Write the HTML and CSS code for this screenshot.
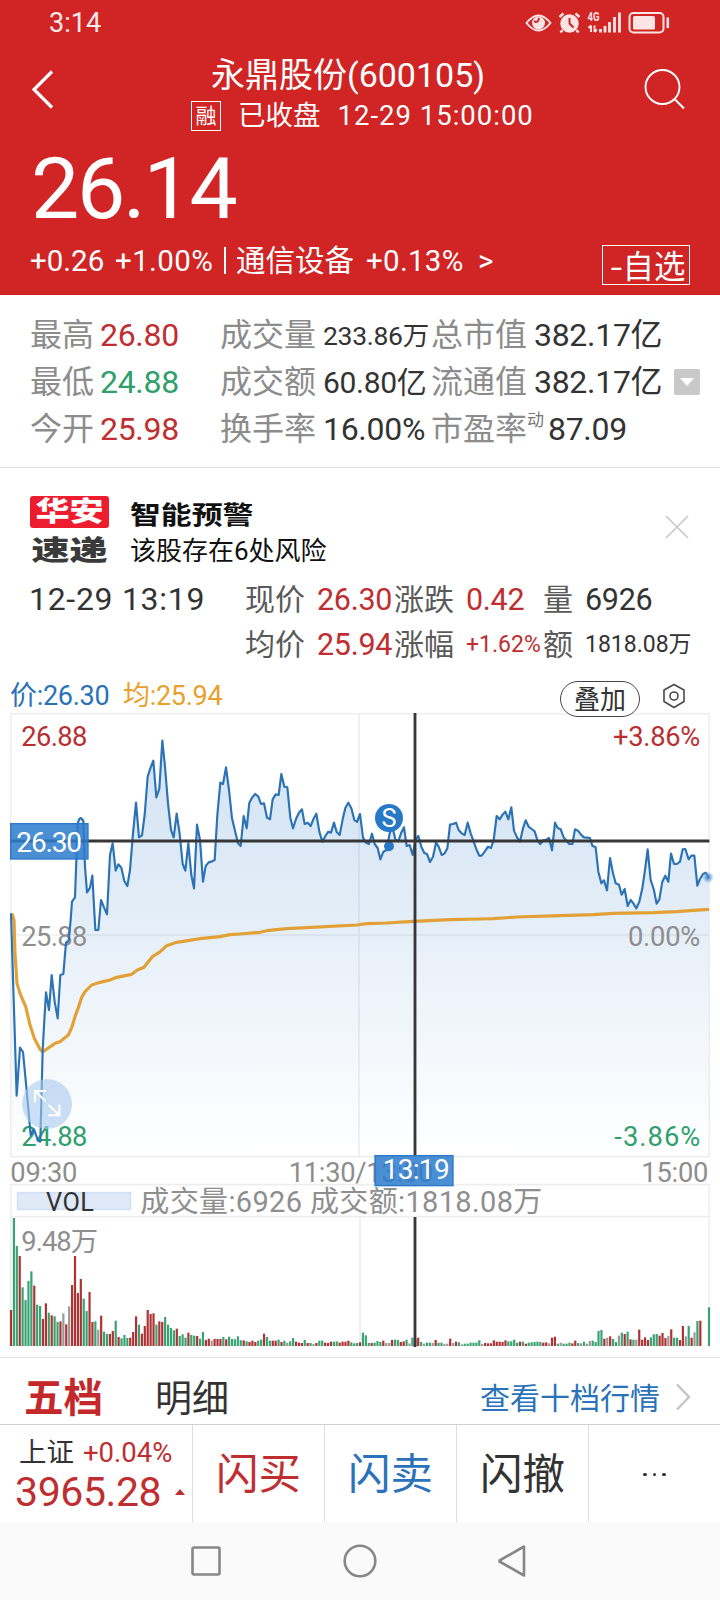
FILE: index.html
```html
<!DOCTYPE html>
<html lang="zh-CN">
<head>
<meta charset="utf-8">
<title>永鼎股份(600105)</title>
<link rel="stylesheet" href="styles.css">
</head>
<body>
<div class="app">
  <header class="header">
    <div class="status">
      <span>3:14</span>
      <svg class="status-icons" width="146" height="24" viewBox="0 0 146 24" fill="none" stroke="#fde4e4" stroke-width="2">
        <path d="M1.500 13Q7.500 5.500 13.500 5.500Q19.500 5.500 25.500 13Q19.500 20.500 13.500 20.500Q7.500 20.500 1.500 13Z"/>
        <circle cx="13.500" cy="13" r="6.500" fill="#fde4e4" stroke="none"/>
        <path d="M9 11Q13 14 14 8" stroke="#d12425" stroke-width="2"/>
        <circle cx="44.500" cy="13.500" r="9.200" fill="#fde4e4" stroke="none"/>
        <path d="M44.500 8V13.500L48.500 17.500" stroke="#d12425" stroke-width="2"/>
        <path d="M34.500 7L38.500 3.500M50.500 3.500L54.500 7M37.500 20L35.500 22.500M51.500 20L53.500 22.500" stroke-width="2.400"/>
        <path d="M66 15.500V22M63.500 18L66 15.500M69.500 15.500V22M69.500 22L72 19.500" stroke-width="1.900"/>
        <path d="M75.500 19V22.500M80 16V22.500M84.500 12V22.500M89.500 7V22.500M94.500 2.500V22.500" stroke-width="2.800"/>
        <rect x="104.500" y="3" width="34" height="19.500" rx="4"/>
        <rect x="108" y="6" width="22" height="13.500" rx="1.500" fill="#fde4e4" stroke="none"/>
        <path d="M142.800 7.500V18" stroke-width="2.600"/>
        <text x="62.500" y="11.300" class="net" fill="#fde4e4" stroke="none" textLength="12" lengthAdjust="spacingAndGlyphs">4G</text>
      </svg>
    </div>
    <div class="topbar">
      <svg class="back" width="26" height="44" viewBox="0 0 26 44" fill="none" stroke="#fff" stroke-width="3.200"><path d="M23 4.500L5 22.500L23 40.500"/></svg>
      <div class="heading">
        <h1 class="title">永鼎股份(600105)</h1>
        <div class="session"><span class="margin-tag">融</span><span class="closed">已收盘</span><span class="stamp">12-29 15:00:00</span></div>
      </div>
      <svg class="search" width="44" height="44" viewBox="0 0 44 44" fill="none" stroke="#fff" stroke-width="1.900"><circle cx="20.500" cy="20" r="17"/><path d="M32.500 32L42 41.500"/></svg>
    </div>
    <div class="price">26.14</div>
    <div class="change">
      <span class="delta">+0.26</span><span class="pct">+1.00%</span><i class="bar"></i><span class="sector">通信设备</span><span class="sector-pct">+0.13%</span><span class="gt">&gt;</span>
      <button class="watch"><span class="minus">-</span>自选</button>
    </div>
  </header>

  <section class="stats">
    <div class="stat-row"><span>最高</span><b class="red">26.80</b><span>成交量</span><b class="small">233.86万</b><span>总市值</span><b>382.17亿</b></div>
    <div class="stat-row"><span>最低</span><b class="green">24.88</b><span>成交额</span><b class="medium">60.80亿</b><span>流通值</span><b>382.17亿</b><i class="expand"><i class="down"></i></i></div>
    <div class="stat-row"><span>今开</span><b class="red">25.98</b><span>换手率</span><b>16.00%</b><span>市盈率</span><b class="pe"><sup>动</sup>87.09</b></div>
  </section>

  <section class="alert">
    <div class="brand"><div class="brand-top"><span class="squash">华安</span></div><div class="brand-bottom">速递</div></div>
    <div class="alert-text"><div class="alert-title"><span class="wide">智能预警</span></div><div class="alert-sub">该股存在6处风险</div></div>
    <svg class="close" width="24" height="24" viewBox="0 0 24 24" stroke="#c9c9c9" stroke-width="1.700"><path d="M1 1L23 23M23 1L1 23"/></svg>
  </section>

  <section class="detail">
    <div class="detail-row"><b class="moment">12-29 13:19</b><span>现价</span><b class="red">26.30</b><span>涨跌</span><b class="red">0.42</b><span>量</span><b>6926</b></div>
    <div class="detail-row"><b></b><span>均价</span><b class="red">25.94</b><span>涨幅</span><b class="red fine">+1.62%</b><span>额</span><b class="fine">1818.08万</b></div>
  </section>

  <section class="legend">
    <span class="now">价:26.30</span><span class="avg">均:25.94</span>
    <button class="overlay">叠加</button>
    <svg class="gear" width="24" height="26" viewBox="0 0 24 26" fill="none" stroke="#4a4a4a" stroke-width="1.600"><path d="M12 1.500L22 7V18.500L12 24.500L2 18.500V7Z"/><circle cx="12" cy="13" r="4"/></svg>
  </section>

  <svg class="chart" viewBox="0 39 2160 1911">
    <defs>
      <linearGradient id="area" gradientUnits="userSpaceOnUse" x1="0" y1="120" x2="0" y2="1370">
        <stop offset="0" stop-color="#2f7bd0" stop-opacity=".21"/><stop offset=".25" stop-color="#2f7bc8" stop-opacity=".17"/><stop offset=".5" stop-color="#2f7bc8" stop-opacity=".11"/><stop offset="1" stop-color="#2f7bc8" stop-opacity="0"/>
      </linearGradient>
      <radialGradient id="last"><stop offset="0" stop-color="#2a72b8"/><stop offset="1" stop-color="#7fb4e8" stop-opacity=".25"/></radialGradient>
    </defs>
    <g fill="none" stroke="#eeeef0" stroke-width="5">
      <path d="M32 41H2128V1370H32Z M1077 41V1370 M32 705H2128"/>
      <path d="M32 1938V1454H2128V1938 M32 1550H2128 M1080 1550V1938"/>
    </g>
    <path id="price-area" fill="url(#area)"/>
    <g class="axis">
      <text x="64" y="137" class="up" textLength="198">26.88</text>
      <text x="64" y="737" textLength="198">25.88</text>
      <text x="64" y="1337" class="fall" textLength="198">24.88</text>
      <text x="1839" y="137" class="up" textLength="262">+3.86%</text>
      <text x="1884" y="737" textLength="217">0.00%</text>
      <text x="1843" y="1337" class="fall" textLength="258">-3.86%</text>
      <text x="31" y="1446" textLength="201">09:30</text>
      <text x="866" y="1446" textLength="434">11:30/13:00</text>
      <text x="1924" y="1446" textLength="201">15:00</text>
    </g>
    <path id="avg-line" class="avg-line"/>
    <path id="price-line" class="price-line"/>
    <circle cx="2124" cy="532" r="16" fill="url(#last)"/>
    <circle cx="1167" cy="439" r="15" fill="#2878c8"/>
    <circle cx="1167" cy="354" r="42" fill="#2878c8"/>
    <text x="1167" y="381" class="mark">S</text>
    <circle cx="141" cy="1212" r="75" fill="#a9c9ee" opacity=".6"/>
    <path d="M136 1203L105 1173M105 1206V1173H138M146 1215L178 1246M178 1214V1246H145" fill="none" stroke="#fff" stroke-width="6"/>
    <g id="volume"></g>
    <path d="M32 423H2128M1245 39V1369M1245 1551V1941" stroke="#373737" stroke-width="8.500"/>
    <g fill="#2c7bcd" fill-opacity=".86" stroke="#2d79c8" stroke-width="4">
      <rect x="32" y="371" width="232" height="106"/>
      <rect x="1125" y="1367" width="234" height="90"/>
    </g>
    <text x="49" y="456" class="tag" textLength="197">26.30</text>
    <text x="1148" y="1438" class="tag" textLength="201">13:19</text>
    <rect x="53" y="1478" width="338" height="50" fill="#dfe9f8" stroke="#d2e0f5" stroke-width="5"/>
    <text x="138" y="1532" class="vol" textLength="144">VOL</text>
    <text x="421" y="1537" class="vol-info" textLength="1206">成交量:6926 成交额:1818.08万</text>
    <text x="64" y="1652" class="vol-max" textLength="230">9.48万</text>
  </svg>

  <section class="tabs">
    <span class="tab on">五档</span><span class="tab">明细</span><a class="more">查看十档行情</a>
    <svg width="18" height="28" viewBox="0 0 18 28" fill="none" stroke="#c4c4c4" stroke-width="2.400"><path d="M3 1.500L15 14L3 26.500"/></svg>
  </section>

  <footer class="trade">
    <div class="index">
      <div class="index-top"><span>上证</span><span class="red">+0.04%</span></div>
      <div class="index-value">3965.28<i class="up-mark"></i></div>
    </div>
    <button class="action red">闪买</button>
    <button class="action blue">闪卖</button>
    <button class="action">闪撤</button>
    <button class="action dots"><i></i><i></i><i></i></button>
  </footer>

  <nav class="nav">
    <svg width="32" height="34" viewBox="0 0 32 34" fill="none" stroke="#878787" stroke-width="2.600"><rect x="2.500" y="3.500" width="27" height="27" rx="1.500"/></svg>
    <svg width="34" height="34" viewBox="0 0 34 34" fill="none" stroke="#878787" stroke-width="2.600"><circle cx="17" cy="17" r="15.300"/></svg>
    <svg width="30" height="34" viewBox="0 0 30 34" fill="none" stroke="#878787" stroke-width="2.600" stroke-linejoin="round"><path d="M27 2.500V31.500L2.500 17.500V16.500Z"/></svg>
  </nav>
</div>
<script src="chart.js"></script>
</body>
</html>
```

FILE: styles.css
```css
* { box-sizing: border-box; }
body { margin: 0; background: #fff; color: #333; font-family: Roboto, "Noto Sans CJK SC", sans-serif; }
button { margin: 0; padding: 0; background: none; border: 0; color: inherit; font: inherit; }
b, h1 { font-weight: 400; margin: 0; }
i { display: block; }
span, b { white-space: nowrap; }
.app { width: 720px; height: 1600px; display: flex; flex-direction: column; overflow: hidden; }
.app > * { flex: none; }
.red { color: #bf2e30; }
.green { color: #2fa06d; }
.blue { color: #2a72ba; }

.header { height: 295px; background: #d12425; color: #fff; }
.status { height: 45px; padding: 0 49px 0 49px; display: flex; justify-content: space-between; font-size: 27px; line-height: 47px; color: #fde9e9; }
.status-icons { margin-top: 10px; }
.net { font-size: 12.500px; font-weight: 700; }
.topbar { height: 89px; display: grid; grid-template-columns: 60px 1fr 78px; }
.back { margin: 22px 0 0 29px; }
.search { margin-top: 22px; }
.heading { padding-top: 9px; }
.title { margin-left: 151px; font-size: 34px; line-height: 42px; white-space: nowrap; }
.session { display: flex; align-items: center; height: 38px; margin-left: 131px; font-size: 27.500px; line-height: 38px; }
.margin-tag { width: 30px; height: 30px; margin-top: 2px; border: 1px solid #fff; font-size: 21px; line-height: 28px; text-align: center; }
.closed { margin: 1px 0 0 17px; }
.stamp { margin: 1px 0 0 17px; letter-spacing: 1px; }
.price { height: 109px; padding-left: 31px; font-size: 86px; line-height: 110px; letter-spacing: -2.300px; }
.change { display: flex; height: 52px; padding: 0 30px; font-size: 29.500px; line-height: 36px; }
.delta { width: 85px; }
.pct { width: 109px; letter-spacing: .4px; }
.bar { width: 2px; height: 27px; margin-top: 4px; background: #fff; }
.sector { width: 130px; margin-left: 10px; }
.sector-pct { width: 112px; letter-spacing: .3px; }
.gt { flex: 1; }
.watch { display: flex; justify-content: center; width: 88px; height: 40px; margin-top: 2px; border: 1px solid #fff; font-size: 31.500px; line-height: 44px; white-space: nowrap; }
.minus { width: 16px; transform: scaleX(1.300); transform-origin: 0 50%; }

.stats { height: 173px; padding: 17px 0 0 30px; border-bottom: 1px solid #e0e0e0; font-size: 32px; line-height: 47px; }
.stat-row { display: grid; grid-template-columns: 70px 120px 103px 108px 103px 140px 26px; align-items: center; height: 47px; }
.stat-row b { letter-spacing: -.3px; }
.stat-row span { color: #8c8c8c; }
.stat-row .small { font-size: 26.500px; }
.stat-row .medium { font-size: 30px; }
.pe { display: flex; margin-left: -7px; }
.pe sup { width: 21px; font-size: 17px; line-height: 29px; vertical-align: baseline; color: #777; }
.expand { display: grid; place-items: center; width: 26px; height: 26px; margin-top: -2px; border-radius: 2px; background: #c9c9c9; }
.down { border: 7px solid transparent; border-top: 8px solid #fff; border-bottom: 0; }

.alert { display: flex; height: 108px; padding: 28px 31px 0 30px; color: #111; }
.brand { width: 79px; }
.brand-top { height: 32px; border-radius: 3px; background: #ed1c2e; color: #fff; font-size: 34px; font-weight: 900; line-height: 32px; text-align: center; }
.squash { display: inline-block; transform: translateY(-1px) scaleY(.8); }
.brand-bottom { height: 38px; font-size: 38px; font-weight: 900; line-height: 46px; text-align: center; color: #3a3a3a; transform: scaleY(.72); transform-origin: 50% 60%; }
.alert-text { flex: 1; margin-left: 21px; }
.alert-title { height: 37px; font-size: 25.500px; font-weight: 700; line-height: 38px; }
.wide { display: inline-block; transform: scaleX(1.210); transform-origin: 0 50%; }
.alert-sub { font-size: 26px; line-height: 37px; }
.close { margin-top: 19px; }

.detail { padding-top: 1px; margin-bottom: -1px; font-size: 30.500px; line-height: 45px; }
.detail-row { display: grid; grid-template-columns: 215px 72px 77px 72px 77px 42px 1fr; height: 45px; padding-left: 30px; align-items: center; }
.detail-row b { letter-spacing: -.3px; }
.detail-row span { color: #5a5a5a; font-size: 30px; }
.detail-row .moment { font-size: 32px; letter-spacing: .7px; margin-left: -1px; }
.detail-row .fine { font-size: 23px; letter-spacing: 0; }

.legend { display: flex; height: 47px; padding: 7px 0 0 10px; font-size: 27px; line-height: 47px; letter-spacing: -.3px; position: relative; z-index: 1; }
.now { width: 113px; color: #2a72b8; }
.avg { width: 437px; color: #e9a02c; }
.overlay { width: 80px; height: 36px; margin: 8px 22px 0 0; border: 1.500px solid #444; border-radius: 18px; font-size: 26px; line-height: 36px; background: #fff; }
.gear { margin-top: 10px; }

.chart { display: block; width: 720px; height: 637px; }
.axis text { font-size: 82px; fill: #8e8e8e; }
.axis .up { fill: #b92f31; }
.axis .fall { fill: #2fa06d; }
.price-line { fill: none; stroke: #2c73b5; stroke-width: 6.500; stroke-linejoin: round; }
.avg-line { fill: none; stroke: #e2a137; stroke-width: 9.500; stroke-linejoin: round; }
.mark { font-size: 76px; fill: #fff; text-anchor: middle; }
.tag { font-size: 84px; fill: #fff; }
.vol { font-size: 76px; fill: #333; }
.vol-info { font-size: 87px; fill: #8e8e8e; }
.vol-max { font-size: 82px; fill: #8e8e8e; }
.bar-r { fill: #ad3334; }
.bar-g { fill: #3aa374; }
.bar-x { fill: #999; }

.tabs { display: flex; align-items: center; height: 67px; margin-top: 7px; padding: 12px 28px 0 24px; border-top: 1px solid #e2e2e2; }
.tab { width: 131px; padding-top: 5px; font-size: 37px; line-height: 54px; }
.tab.on { padding-top: 3px; font-size: 39.500px; font-weight: 700; color: #c4282a; }
.more { margin: -3px 14px 0 auto; font-size: 30px; color: #2a72ba; }

.trade { display: grid; grid-template-columns: 193px 132px 132px 132px 1fr; height: 98px; border-top: 1.500px solid #cfcfcf; }
.index { padding: 7px 0 0 15px; border-right: 1px solid #dedede; }
.index-top { display: flex; gap: 9px; padding-left: 4px; font-size: 27.500px; line-height: 42px; }
.index-value { display: flex; align-items: center; font-size: 41px; line-height: 38px; margin-top: -1px; letter-spacing: -.4px; color: #bf2e30; }
.up-mark { margin: 0 0 0 14px; border: 5.500px solid transparent; border-bottom: 6px solid #bf2e30; border-top: 0; }
.action { border-right: 1px solid #dedede; font-size: 42.500px; line-height: 99px; white-space: nowrap; }
.dots { display: flex; justify-content: center; align-items: center; gap: 6px; border-right: 0; }
.dots i { width: 3.500px; height: 3.500px; border-radius: 50%; background: #333; }

.nav { display: flex; height: 79px; padding: 22px 0 0 190px; background: #fafafa; }
.nav svg:nth-child(2) { margin-left: 121px; }
.nav svg:nth-child(3) { margin-left: 120px; }
```

FILE: chart.js
```js
// One unit is a third of a pixel; pairs are x,y.
const price = `33,640 50,1187 60,1043 69,1056 78,1150 92,1305 102,1288 108,1305 114,1322 121,1325 128,1050 133,960 138,877 147,930 155,825 164,905 173,955 181,825 190,822 198,728 206,722 212,660
216,605 225,592 233,370 238,357 243,354 250,362 255,500 261,577 270,563 277,527 286,690 295,690 303,600 312,622 321,643 330,465 338,430 347,512 355,493 364,503 373,543 382,558 390,510 399,400
408,308 417,412 426,406 434,345 443,230 452,202 460,182 469,292 478,266 487,122 495,200 504,310 513,390 521,412 530,341 539,402 548,492 556,512 565,430 574,525 582,565 591,374 600,420 609,545
617,498 626,487 634,485 644,480 652,345 661,248 669,252 678,202 687,270 696,355 705,392 714,430 722,438 731,348 740,385 748,308 757,292 766,282 775,290 783,312 792,310 801,353 810,358 818,298
827,283 836,285 844,222 853,260 862,262 871,353 879,385 888,357 897,338 906,328 914,372 923,368 932,378 940,358 949,341 958,395 967,425 976,408 985,395 993,398 1002,368 1010,396 1019,405
1028,358 1036,324 1045,308 1054,325 1063,360 1071,366 1080,342 1089,413 1098,428 1107,432 1116,401 1124,432 1133,444 1141,478 1150,455 1160,450 1169,400 1177,380 1186,418 1195,424 1203,400
1212,382 1220,438 1229,435 1238,465 1247,418 1255,408 1264,440 1273,459 1281,462 1290,486 1299,470 1308,428 1316,440 1325,465 1334,460 1342,445 1350,374 1359,372 1368,368 1376,390 1385,400
1394,405 1403,368 1412,400 1421,425 1430,450 1438,467 1445,467 1454,455 1464,440 1473,444 1481,420 1490,348 1499,358 1507,345 1516,335 1525,358 1534,322 1542,392 1551,412 1560,425 1569,385
1577,361 1586,380 1595,387 1604,394 1612,420 1621,432 1630,420 1638,420 1647,414 1656,451 1665,368 1673,384 1682,388 1691,412 1699,422 1708,432 1717,432 1725,388 1734,392 1743,404 1752,412
1761,413 1770,414 1777,437 1787,442 1795,515 1804,550 1812,541 1821,571 1830,474 1839,520 1847,550 1857,554 1865,584 1874,567 1883,618 1892,600 1900,610 1909,625 1918,605 1927,565 1935,510
1943,448 1952,540 1961,567 1970,611 1978,598 1987,545 1996,527 2005,545 2013,461 2022,492 2031,492 2040,485 2048,448 2056,447 2066,478 2074,467 2083,467 2092,557 2100,537 2109,522 2117,518 2126,530`;
const average = `36,640 42,660 45,760 51,850 60,880 77,920 90,975 103,1015 120,1048 128,1056 145,1044 165,1030 180,1025 205,1005 215,983 225,950 235,923 245,892 255,875 275,855 300,847 330,840
350,832 395,823 412,810 432,802 458,769 478,757 500,737 530,727 600,716 660,710 690,704 720,702 780,697 800,692 860,686 920,683 1070,675 1100,671 1160,669 1240,664 1350,659 1440,657 1480,656
1550,651 1680,647 1780,644 1840,640 1960,638 2030,635 2080,631 2127,628`;

// Colour letter (r up, g down, x flat) and bar height per minute.
const volume = `r108 g384 g300 r270 g176 g138 g195 g224 r181 g124 g120 r81 r128 g100 r92 g89 g72 r74 x98 r65 x119 r183 r270 r159 r201 g142 g105 r162 r72 g74 x49 r91 g43 g36 r36 r45 g76 r27 g23 g33 g24 r25 r42 r89 g64 r37 r60
r108 r96 r98 g64 r74 r72 g87 g64 g54 g47 r52 g30 g35 g25 r40 g33 g31 r30 g22 g42 r18 r22 x16 r21 r21 r21 g27 r20 g28 g21 g20 g29 g17 r17 g14 r12 r16 r12 g16 g19 r37 g27 g16 r16 r16 g19 r12 g16 x10 g14 g24 r13 r10 r9
g18 r9 g9 x6 r9 g16 g16 r10 r9 r13 g13 g14 r10 r13 r13 r16 g11 g8 g9
r11 g40 g32 g9 r9 g10 g15 g12 r16 x9 x9 r18 g19 g18 r12 r14 g19 x8 g25 r20 r25 g12 x7 g10 g10 x9 r18 g10 g10 x6 x7 r22 x9 r13 g11 x5 g7 g7 g10 g10 g10 g17 x6 r9 r8 r8 r17 r13 r13 r12 r17 g14 g14 g19 g10 r13 g13 r7
g10 g11 g12 g13 g12 r10 r11 x8 r25 r28 g7 x10 g7 g7 g10 r8 r16 g9 x8 g13 x7 x15 g16 g12 g45 g48 r22 x25 r29 g21 g12 x31 g40 r36 g43 r20 g19 x19 r49 r19 r26 r18 g26 g35 g36 r31 r39 r24 x30 r50 g25 g25 r18 r60 x29
g60 r25 x41 g75 r76`.split(/\s+/);

const line = points => 'M' + points.trim().split(/\s+/).join('L');
document.getElementById('price-line').setAttribute('d', line(price));
document.getElementById('avg-line').setAttribute('d', line(average));
document.getElementById('price-area').setAttribute('d', line(price) + 'V1370H33Z');

const group = document.getElementById('volume');
function addBar(x, kind, height) {
  const bar = document.createElementNS('http://www.w3.org/2000/svg', 'rect');
  bar.setAttribute('x', x - 3.3);
  bar.setAttribute('y', 1938 - height);
  bar.setAttribute('width', 6.6);
  bar.setAttribute('height', height);
  bar.setAttribute('class', 'bar-' + kind);
  group.appendChild(bar);
}
volume.forEach((v, i) => addBar(33 + i * 2068 / (volume.length - 1), v[0], +v.slice(1)));
addBar(2127, 'g', 116);
```
